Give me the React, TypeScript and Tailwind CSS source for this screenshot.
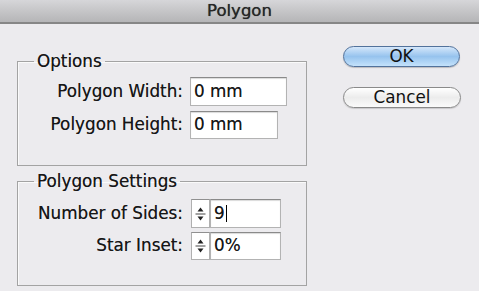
import React from "react";

function Stepper() {
  return (
    <div className="flex h-full w-[19px] flex-col items-center justify-center border border-[#b0b0b0] border-t-[#909090] bg-white">
      <svg width="13" height="22" viewBox="0 0 13 22">
        <path d="M6.5 4.5 L9.5 8.5 L3.5 8.5 Z" fill="#222" />
        <line x1="1.5" y1="11" x2="11.5" y2="11" stroke="#444" strokeWidth="1" />
        <path d="M3.5 13.5 L9.5 13.5 L6.5 17.5 Z" fill="#222" />
      </svg>
    </div>
  );
}

function TextBox({ w, children }: { w: string; children?: React.ReactNode }) {
  return (
    <div
      className={`${w} flex h-full items-center border border-[#b3b3b3] border-t-[#8a8a8a] bg-white pl-[3px] shadow-[inset_0_1px_1px_rgba(0,0,0,0.15)]`}
    >
      {children}
    </div>
  );
}

export default function App() {
  return (
    <div
      className="flex h-[291px] w-[479px] flex-col overflow-hidden bg-[#ecebee] text-[16.8px] text-[#161616] [text-shadow:0_0_0.5px_rgba(0,0,0,0.55)]"
      style={{ fontFamily: '"DejaVu Sans", sans-serif' }}
    >
      <div className="flex h-[24px] items-center justify-center border-b-2 border-[#868686] bg-gradient-to-b from-[#d6d6d9] to-[#b5b5b7] text-[16.5px] text-[#262626] [text-shadow:0_0_0.7px_rgba(0,0,0,0.7)]">
        Polygon
      </div>
      <div className="flex flex-1 flex-row">
        <div className="ml-[17px] mt-[28px] flex w-[290px] flex-col">
          <fieldset className="h-[114px] border border-[#a3a3a3] shadow-[inset_1px_1px_0_#fafafa]">
            <legend className="ml-[16px] px-[3px] leading-[18px]">Options</legend>
            <div className="mt-[7px] flex h-[29px] items-center">
              <div className="w-[166px] pr-[1px] text-right">Polygon Width:</div>
              <div className="ml-[6px] h-full">
                <TextBox w="w-[97px]">0 mm</TextBox>
              </div>
            </div>
            <div className="mt-[5px] flex h-[28px] items-center">
              <div className="w-[166px] pr-[1px] text-right">Polygon Height:</div>
              <div className="ml-[6px] h-full">
                <TextBox w="w-[88px]">0 mm</TextBox>
              </div>
            </div>
          </fieldset>
          <fieldset className="mt-[6px] h-[114px] border border-[#a3a3a3] shadow-[inset_1px_1px_0_#fafafa]">
            <legend className="ml-[16px] px-[3px] leading-[18px]">Polygon Settings</legend>
            <div className="mt-[9px] flex h-[29px] items-center">
              <div className="w-[166px] pr-[1px] text-right">Number of Sides:</div>
              <div className="ml-[7px] flex h-full">
                <Stepper />
                <TextBox w="w-[71px]">
                  9<span className="ml-[1px] inline-block h-[17px] w-[1px] bg-black" />
                </TextBox>
              </div>
            </div>
            <div className="mt-[4px] flex h-[28px] items-center">
              <div className="w-[166px] pr-[1px] text-right">Star Inset:</div>
              <div className="ml-[7px] flex h-full">
                <Stepper />
                <TextBox w="w-[71px]">0%</TextBox>
              </div>
            </div>
          </fieldset>
        </div>
        <div className="ml-[36px] mt-[22px] flex flex-col gap-[20px]">
          <button className="flex h-[21px] w-[117px] items-center justify-center rounded-full border border-[#52729b] bg-gradient-to-b from-[#d5e7fa] via-[#96c3ee] to-[#c4e2fb] text-[16.8px] leading-none text-[#111] shadow-[0_1px_1px_rgba(0,0,0,0.2)]">
            OK
          </button>
          <button className="flex h-[21px] w-[118px] items-center justify-center rounded-full border border-[#8a8a8a] bg-gradient-to-b from-[#ffffff] via-[#ececec] to-[#fafafa] text-[16.8px] leading-none text-[#111] shadow-[0_1px_1px_rgba(0,0,0,0.15)]">
            Cancel
          </button>
        </div>
      </div>
    </div>
  );
}
